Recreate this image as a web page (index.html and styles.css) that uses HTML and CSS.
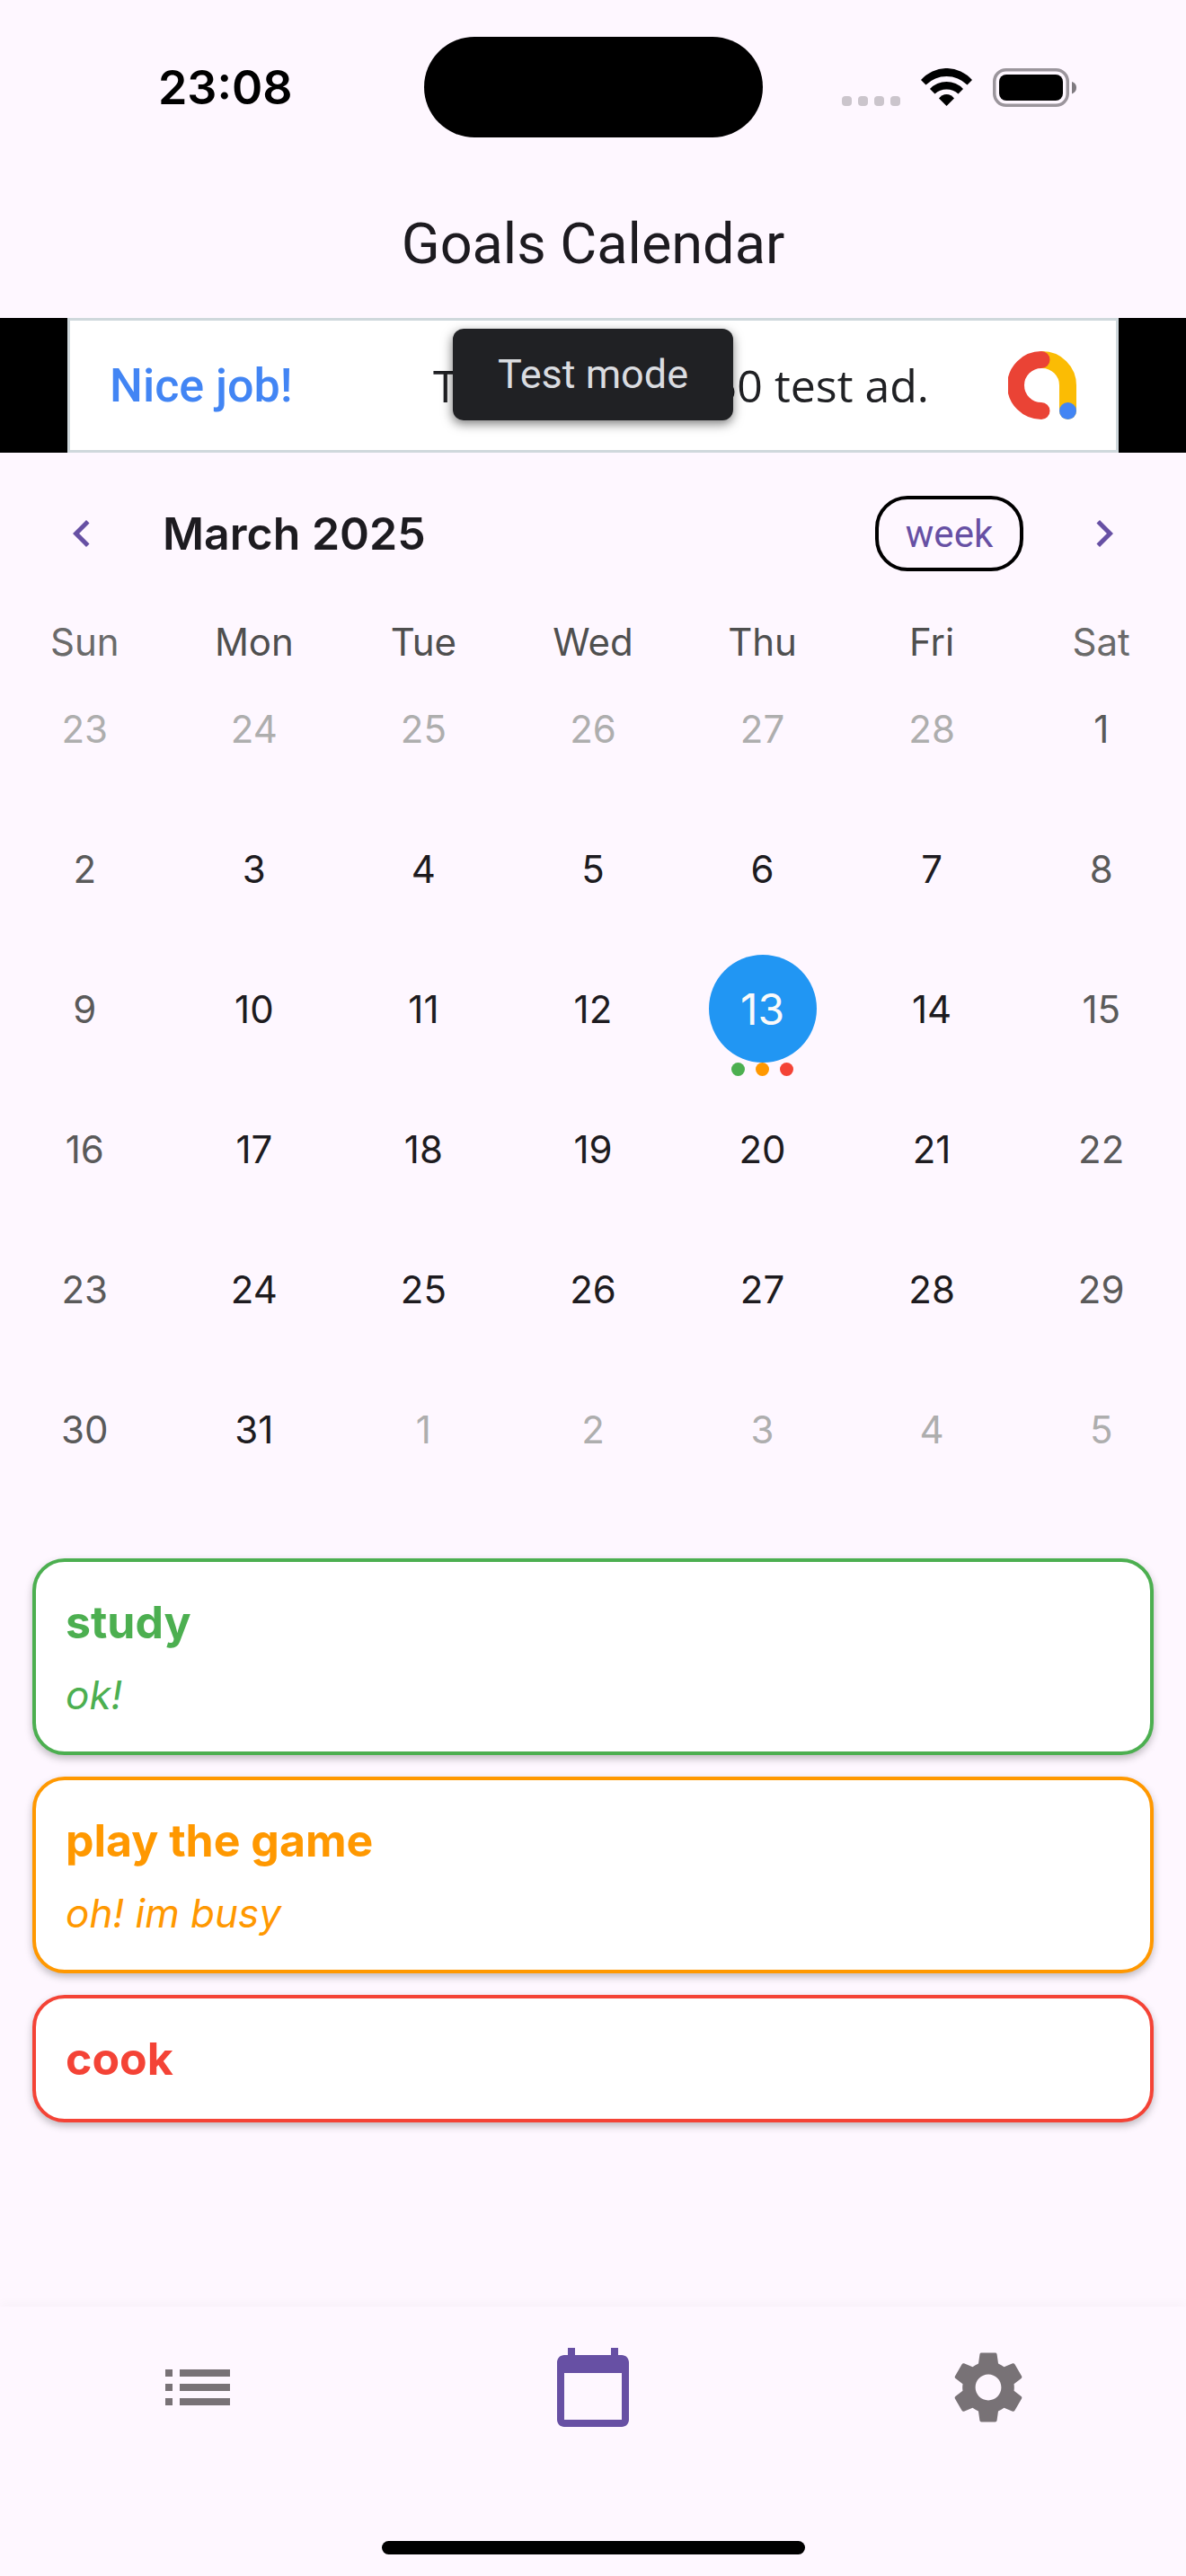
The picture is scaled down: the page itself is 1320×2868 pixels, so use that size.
FILE: index.html
```html
<!DOCTYPE html>
<html lang="en">
<head>
<meta charset="utf-8">
<meta name="viewport" content="width=device-width, initial-scale=1">
<title>Goals Calendar</title>
<link rel="stylesheet" href="styles.css">
</head>
<body>
<div class="status-bar">
  <span class="status-time">23:08</span>
  <span class="island"></span>
  <span class="status-icons">
    <span class="cell-dots"><i></i><i></i><i></i><i></i></span>
    <svg class="wifi" viewBox="0 0 57 42" aria-hidden="true">
      <path d="M0 13A37.700 37.700 0 0 1 57 13L51.500 18.500A32.600 32.600 0 0 0 5.500 18.500Z"/>
      <path d="M10 23A25.400 25.400 0 0 1 47 23L41.500 28.500A19.400 19.400 0 0 0 15.500 28.500Z"/>
      <path d="M20 33.500A10.300 10.300 0 0 1 37 33.500L28.500 42Z"/>
    </svg>
    <svg class="battery" viewBox="0 0 94 43" aria-hidden="true">
      <rect x="1.750" y="1.750" width="81.500" height="39.500" rx="13" fill="none" stroke="#9b959c" stroke-width="3.500"/>
      <rect x="7" y="7" width="71" height="29" rx="8"/>
      <path d="M88 15Q93 16.500 93 21.500T88 28.500Z" fill="#7f7a80"/>
    </svg>
  </span>
</div>

<header class="app-bar"><h1>Goals Calendar</h1></header>

<aside class="ad-strip">
  <a class="ad" href="#ad">
    <span class="ad-headline">Nice job!</span>
    <span class="ad-body">This is a 320x50 test ad.</span>
    <svg class="ad-logo" viewBox="0 0 76 76" fill="none" stroke-width="19" stroke-linecap="round" aria-hidden="true">
      <path d="M38 9.500A28.500 28.500 0 0 1 66.500 38V66.500" stroke="#fbbc04"/>
      <path d="M37 9.500A28.500 28.500 0 0 0 37 66.500" stroke="#ea4335"/>
      <circle cx="66.500" cy="66.500" r="9.500" fill="#4285f4"/>
    </svg>
  </a>
  <span class="ad-tooltip">Test mode</span>
</aside>

<main class="content">
  <div class="calendar-header">
    <button class="chevron" type="button" aria-label="Previous month">
      <svg viewBox="0 0 24 24"><path d="M15.410 7.410L14 6l-6 6 6 6 1.410-1.410L10.830 12z"/></svg>
    </button>
    <h2>March 2025</h2>
    <button class="format" type="button">week</button>
    <button class="chevron" type="button" aria-label="Next month">
      <svg viewBox="0 0 24 24"><path d="M10 6L8.590 7.410 13.170 12l-4.580 4.590L10 18l6-6z"/></svg>
    </button>
  </div>

  <table class="calendar">
    <thead>
      <tr><th class="weekend">Sun</th><th>Mon</th><th>Tue</th><th>Wed</th><th>Thu</th><th>Fri</th><th class="weekend">Sat</th></tr>
    </thead>
    <tbody>
      <tr><td class="outside"><button>23</button></td><td class="outside"><button>24</button></td><td class="outside"><button>25</button></td><td class="outside"><button>26</button></td><td class="outside"><button>27</button></td><td class="outside"><button>28</button></td><td class="weekend"><button>1</button></td></tr>
      <tr><td class="weekend"><button>2</button></td><td><button>3</button></td><td><button>4</button></td><td><button>5</button></td><td><button>6</button></td><td><button>7</button></td><td class="weekend"><button>8</button></td></tr>
      <tr><td class="weekend"><button>9</button></td><td><button>10</button></td><td><button>11</button></td><td><button>12</button></td><td><button class="selected">13<span class="markers"><i class="green"></i><i class="orange"></i><i class="red"></i></span></button></td><td><button>14</button></td><td class="weekend"><button>15</button></td></tr>
      <tr><td class="weekend"><button>16</button></td><td><button>17</button></td><td><button>18</button></td><td><button>19</button></td><td><button>20</button></td><td><button>21</button></td><td class="weekend"><button>22</button></td></tr>
      <tr><td class="weekend"><button>23</button></td><td><button>24</button></td><td><button>25</button></td><td><button>26</button></td><td><button>27</button></td><td><button>28</button></td><td class="weekend"><button>29</button></td></tr>
      <tr><td class="weekend"><button>30</button></td><td><button>31</button></td><td class="outside"><button>1</button></td><td class="outside"><button>2</button></td><td class="outside"><button>3</button></td><td class="outside"><button>4</button></td><td class="outside"><button>5</button></td></tr>
    </tbody>
  </table>

  <section class="goals">
    <article class="goal green"><h3>study</h3><p>ok!</p></article>
    <article class="goal orange"><h3>play the game</h3><p>oh! im busy</p></article>
    <article class="goal red"><h3>cook</h3></article>
  </section>
</main>

<footer class="bottom-bar">
  <nav class="tabs">
    <a href="#list" aria-label="Goals list"><svg viewBox="0 0 24 24"><path d="M3 13h2v-2H3v2zm0 4h2v-2H3v2zm0-8h2V7H3v2zm4 4h14v-2H7v2zm0 4h14v-2H7v2zM7 7v2h14V7H7z"/></svg></a>
    <a class="active" href="#calendar" aria-label="Calendar"><svg viewBox="0 0 24 24"><path d="M20 3h-1V1h-2v2H7V1H5v2H4c-1.100 0-2 .9-2 2v16c0 1.100.9 2 2 2h16c1.100 0 2-.9 2-2V5c0-1.100-.9-2-2-2zm0 18H4V8h16v13z"/></svg></a>
    <a href="#settings" aria-label="Settings"><svg viewBox="0 0 24 24"><path d="M19.140,12.940c0.040-0.300,0.060-0.610,0.060-0.940c0-0.320-0.020-0.640-0.070-0.940l2.030-1.580c0.180-0.140,0.230-0.410,0.120-0.610l-1.920-3.320c-0.120-0.220-0.370-0.290-0.590-0.220l-2.390,0.960c-0.500-0.380-1.030-0.700-1.620-0.940L14.400,2.810c-0.040-0.240-0.240-0.410-0.480-0.410h-3.840c-0.240,0-0.430,0.170-0.470,0.410L9.250,5.350C8.660,5.590,8.120,5.920,7.630,6.290L5.240,5.330c-0.220-0.080-0.470,0-0.590,0.220L2.740,8.870C2.620,9.080,2.660,9.340,2.860,9.480l2.030,1.580C4.840,11.360,4.800,11.690,4.800,12s0.020,0.640,0.070,0.940l-2.030,1.580c-0.180,0.140-0.230,0.410-0.120,0.610l1.920,3.320c0.120,0.220,0.370,0.290,0.590,0.220l2.390-0.960c0.500,0.380,1.030,0.700,1.620,0.940l0.360,2.540c0.050,0.240,0.240,0.410,0.480,0.410h3.840c0.240,0,0.440-0.170,0.470-0.410l0.360-2.540c0.590-0.240,1.130-0.560,1.620-0.940l2.390,0.960c0.220,0.080,0.470,0,0.590-0.220l1.920-3.320c0.120-0.220,0.070-0.470-0.120-0.610L19.140,12.940zM12,15.600c-1.980,0-3.600-1.620-3.600-3.600s1.620-3.600,3.600-3.600s3.600,1.620,3.600,3.600S13.980,15.600,12,15.600z"/></svg></a>
  </nav>
  <span class="home-indicator"></span>
</footer>
</body>
</html>
```

FILE: styles.css
```css
* {
  box-sizing: border-box;
}

body {
  margin: 0;
  min-height: 100vh;
  display: flex;
  flex-direction: column;
  background: #fef7ff;
  color: #1d1b20;
  font-family: Inter, "Liberation Sans", sans-serif;
  font-size: 42px;
}

h1,
h2,
h3,
p {
  margin: 0;
}

button {
  padding: 0;
  border: 0;
  background: none;
  color: inherit;
  font: inherit;
  cursor: pointer;
}

svg {
  display: block;
  fill: currentColor;
}

/* Status bar */
.status-bar {
  display: grid;
  grid-template-columns: 1fr 377px 1fr;
  align-items: center;
  padding: 41px 0 24px;
  color: #000;
}

.status-time {
  padding-left: 30px;
  text-align: center;
  font-size: 52px;
  font-weight: 600;
}

.island {
  height: 112px;
  border-radius: 56px;
  background: #000;
}

.status-icons {
  display: flex;
  align-items: center;
  padding-left: 88px;
}

.cell-dots {
  display: flex;
  gap: 7px;
  align-self: flex-end;
  padding-bottom: 1px;
}

.cell-dots i {
  width: 11px;
  height: 11px;
  border-radius: 4px;
  background: #cbc5cc;
}

.wifi {
  width: 57px;
  height: 42px;
  margin: 0 23px;
}

.battery {
  width: 94px;
  height: 43px;
}

/* Title */
.app-bar {
  display: flex;
  align-items: center;
  justify-content: center;
  height: 177px;
  padding-top: 12px;
}

.app-bar h1 {
  font-family: Roboto, sans-serif;
  font-size: 63px;
  font-weight: 400;
}

/* Banner */
.ad-strip {
  position: relative;
  padding: 0 75px;
  background: #000;
}

.ad {
  display: flex;
  align-items: center;
  height: 150px;
  padding: 0 44px;
  border: 3px solid #cfd8dc;
  background: #fff;
  color: #202124;
  font-family: Roboto, sans-serif;
  font-size: 52px;
  text-decoration: none;
  white-space: nowrap;
}

.ad-headline {
  color: #4285f4;
  font-weight: 500;
}

.ad-body {
  margin-left: auto;
  font-family: "Open Sans", sans-serif;
  font-size: 50px;
}

.ad-logo {
  width: 76px;
  height: 76px;
  margin-left: 88px;
  fill: none;
}

.ad-tooltip {
  position: absolute;
  top: 12px;
  left: 50%;
  transform: translateX(-50%);
  padding: 0 50px;
  border-radius: 12px;
  background: #202124;
  box-shadow: 0 4px 12px rgba(0, 0, 0, 0.5);
  color: #dadce0;
  font-family: Roboto, sans-serif;
  font-size: 45px;
  line-height: 102px;
  white-space: nowrap;
}

/* Calendar */
.content {
  flex: 1;
}

.calendar-header {
  display: flex;
  align-items: center;
  height: 180px;
  margin-bottom: 13px;
  padding: 0 61px;
}

.chevron {
  color: #6750a4;
}

.chevron svg {
  width: 60px;
  height: 60px;
}

.calendar-header h2 {
  flex: 1;
  margin-left: 60px;
  font-size: 50px;
  font-weight: 600;
}

.format {
  min-width: 165px;
  height: 84px;
  margin-right: 60px;
  padding: 0 28px;
  border: 4px solid #000;
  border-radius: 36px;
  color: #6750a4;
  font-family: Roboto, sans-serif;
}

.calendar {
  width: 100%;
  table-layout: fixed;
  border-collapse: collapse;
}

.calendar th {
  height: 36px;
  padding: 0;
  color: #4f4f4f;
  font-weight: 400;
  line-height: 36px;
}

.calendar th.weekend {
  color: #6a6a6a;
}

.calendar td {
  height: 156px;
  padding: 0;
  text-align: center;
}

.calendar td.weekend {
  color: #5a5a5a;
}

.calendar td.outside {
  color: #aeaeae;
}

.calendar td button {
  position: relative;
  display: block;
  width: 120px;
  height: 120px;
  margin: 0 auto;
  border-radius: 50%;
}

.calendar td .selected {
  background: #2196f3;
  color: #fafafa;
  font-size: 48px;
}

.markers {
  position: absolute;
  top: 100%;
  left: 0;
  right: 0;
  display: flex;
  justify-content: center;
  gap: 12px;
}

.markers i {
  width: 15px;
  height: 15px;
  border-radius: 50%;
  background: currentColor;
}

.green {
  color: #4caf50;
}

.orange {
  color: #ff9800;
}

.red {
  color: #f44336;
}

/* Goals of the selected day */
.goals {
  display: flex;
  flex-direction: column;
  gap: 24px;
  padding: 66px 36px;
}

.goal {
  display: flex;
  flex-direction: column;
  gap: 14px;
  padding: 31px 33px;
  border: 4px solid currentColor;
  border-radius: 36px;
  background-color: #fff;
  box-shadow: 0 4px 8px rgba(0, 0, 0, 0.25);
}

.goal h3 {
  font-size: 50px;
  font-weight: 700;
  line-height: 72px;
}

.goal p {
  font-size: 44px;
  font-style: italic;
  line-height: 63px;
}

/* Bottom navigation */
.bottom-bar {
  display: flex;
  flex-direction: column;
  align-items: center;
  background: #fef7ff;
  box-shadow: 0 -3px 12px rgba(0, 0, 0, 0.03);
}

.tabs {
  display: grid;
  grid-template-columns: repeat(3, 1fr);
  align-self: stretch;
  padding: 42px 0 123px;
}

.tabs a {
  display: flex;
  justify-content: center;
  color: #787276;
}

.tabs .active {
  color: #6750a4;
}

.tabs svg {
  width: 96px;
  height: 96px;
}

.home-indicator {
  width: 471px;
  height: 15px;
  margin-bottom: 24px;
  border-radius: 8px;
  background: #000;
}
```
